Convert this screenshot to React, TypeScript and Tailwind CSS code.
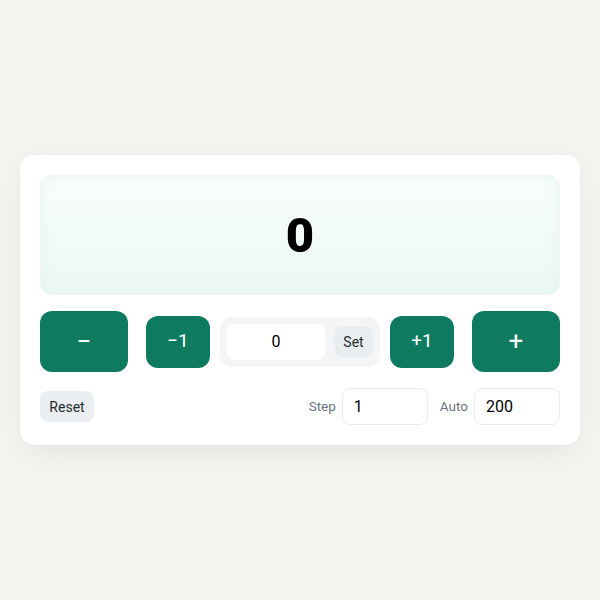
export default function App() {
  return (
    <div className="flex h-[600px] w-[600px] items-center justify-center bg-[#f6f5f2] font-['Roboto',sans-serif]">
      <div className="flex w-[560px] flex-col gap-4 rounded-[14px] bg-white p-5 shadow-[0_8px_30px_rgba(0,0,0,0.07)]">
        <div className="flex h-[120px] items-center justify-center rounded-xl border border-[#eef7f2] bg-gradient-to-b from-[#f8fdfb] to-[#ebf9f3] shadow-[inset_0_0_12px_rgba(220,240,232,0.6)]">
          <span className="text-[49px] font-black leading-none text-black">0</span>
        </div>

        <div className="flex items-center gap-[18px]">
          <button className="flex h-[61px] w-[88px] items-center justify-center rounded-xl bg-[#0e7b61] text-[26px] text-white">
            −
          </button>
          <div className="flex items-center gap-2.5">
            <button className="flex h-[52px] w-16 items-center justify-center rounded-xl bg-[#0e7b61] text-[19px] text-white">
              −1
            </button>
            <div className="flex h-[50px] w-40 items-center gap-[9px] rounded-xl bg-[#f4f5f6] p-[7px]">
              <div className="flex h-9 w-[98px] items-center justify-center rounded-lg bg-white text-base text-black">
                0
              </div>
              <button className="flex h-[31px] w-[39px] items-center justify-center rounded-lg bg-[#eaedf0] text-sm text-[#1f2d2a]">
                Set
              </button>
            </div>
            <button className="flex h-[52px] w-16 items-center justify-center rounded-xl bg-[#0e7b61] text-[19px] text-white">
              +1
            </button>
          </div>
          <button className="flex h-[61px] w-[88px] items-center justify-center rounded-xl bg-[#0e7b61] text-[26px] text-white">
            +
          </button>
        </div>

        <div className="flex items-center">
          <button className="flex h-[31px] w-[54px] items-center justify-center rounded-lg bg-[#eceff2] text-sm text-[#1f2d2a]">
            Reset
          </button>
          <div className="ml-auto flex items-center">
            <span className="mr-1.5 text-[13.5px] text-[#6b7280]">Step</span>
            <div className="flex h-[37px] w-[86px] items-center rounded-lg border border-[#e8eaed] bg-white pl-[11px] text-base text-black">
              1
            </div>
            <span className="ml-3 mr-1.5 text-[13.5px] text-[#6b7280]">Auto</span>
            <div className="flex h-[37px] w-[86px] items-center rounded-lg border border-[#e8eaed] bg-white pl-[11px] text-base text-black">
              200
            </div>
          </div>
        </div>
      </div>
    </div>
  );
}
